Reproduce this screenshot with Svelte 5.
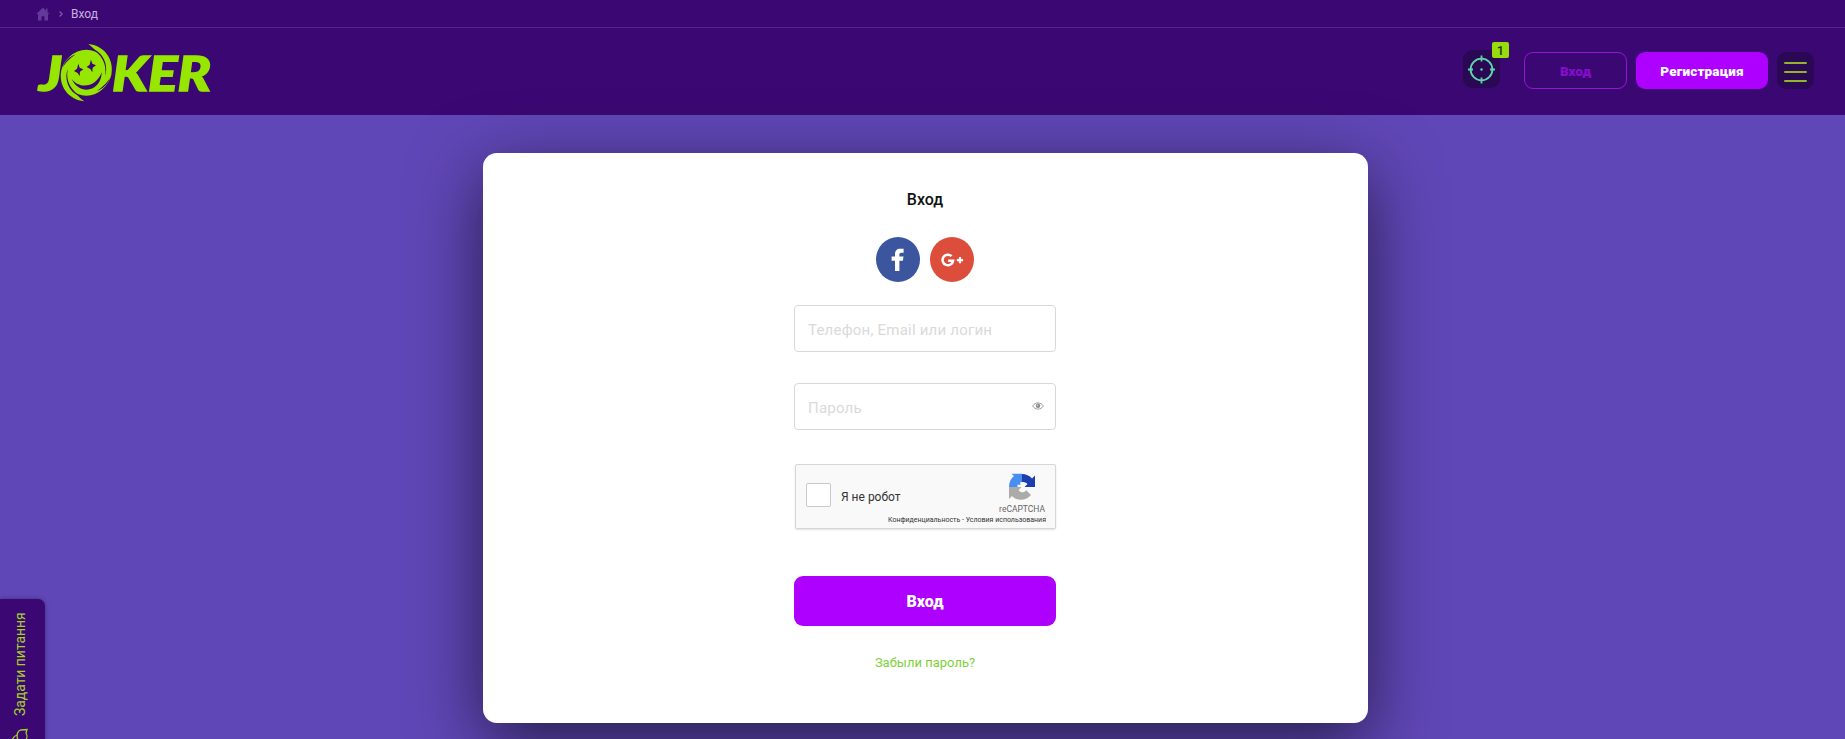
<script lang="ts">
	let login = $state('');
	let password = $state('');
	let showPassword = $state(false);

	const notifications = 1;
</script>

<div class="page">
	<nav class="crumbs">
		<svg class="home" width="14" height="14" viewBox="0 0 14 14">
			<path d="M7 0.6 0.3 7H2v6.6h3.6V9.2h2.8v4.4H12V7h1.7l-2.2-2.1V1.6H10v1.8z" fill="#643999" />
		</svg>
		<svg class="chevron" width="4" height="6" viewBox="0 0 4 6">
			<path d="M.6.5 3.2 3 .6 5.5" fill="none" stroke="#8057ac" stroke-width="1.200" />
		</svg>
		<span>Вход</span>
	</nav>

	<header>
		<a class="logo" href="/" aria-label="Joker">
			<svg width="180" height="64" viewBox="34 40 180 64">
				<g class="word">
					<text x="39" y="91" textLength="23" lengthAdjust="spacingAndGlyphs">J</text>
					<text x="112" y="91" textLength="99" lengthAdjust="spacingAndGlyphs">KER</text>
				</g>
				<g transform="translate(34 40) scale(.3333)">
					<circle cx="157" cy="98" r="74" fill="#3b0873" />
					<circle cx="157" cy="98" r="69" fill="#97e600" />
					<g id="swirl">
						<path d="M163 12C210 16 242 58 232 105C224 135 205 152 180 160C215 125 226 58 163 12z" fill="#97e600" />
						<path d="M170 25C202 42 220 72 213 108C225 78 208 34 170 25z" fill="#3b0873" />
						<path d="M189 153C208 146 222 132 228 114C219 128 208 139 189 153z" fill="#3b0873" />
					</g>
					<use href="#swirl" transform="rotate(180 157 98)" />
					<path d="M133 71l4 12 11 5-10 7-1 14-6-10-11-6 9-7zM171 59l4 12 11 5-10 7-1 14-6-10-11-6 9-7z" fill="#3b0873" />
					<path d="M113 117C136 148 187 143 203 97C203 154 137 169 113 117z" fill="#3b0873" />
				</g>
			</svg>
		</a>

		<div class="actions">
			<button class="icon-button target" aria-label="Бонусы">
				<svg width="27" height="29" viewBox="0 0 27 29" fill="none" stroke="#5ed7ac" stroke-width="1.800">
					<circle cx="13.500" cy="14.500" r="10.900" />
					<path d="M13.500 0.600v5.800M13.500 22.600v5.800M0 14.500h5M22 14.500h5" />
					<circle cx="13.500" cy="14.500" r="1.200" fill="#5ed7ac" stroke="none" />
				</svg>
				<span class="badge">{notifications}</span>
			</button>
			<button class="login">Вход</button>
			<button class="register">Регистрация</button>
			<button class="icon-button menu" aria-label="Меню">
				<span></span>
				<span></span>
				<span></span>
			</button>
		</div>
	</header>

	<main>
		<section class="card">
			<h1>Вход</h1>
			<div class="social">
				<a class="facebook" href="/login/facebook" aria-label="Facebook">
					<svg width="14" height="24" viewBox="0 0 14 24">
						<path d="M4 23V12.700H.6V8.500H4V6.200C4 2.700 6 .8 9 .8h3.600v4H10.200c-1.400 0-1.800.7-1.800 1.900v1.800h4.100l-.6 4.200H8.400V23z" fill="#fff" />
					</svg>
				</a>
				<a class="google" href="/login/google" aria-label="Google+">
					<svg width="23" height="14" viewBox="0 0 23 14" fill="none" stroke="#fff">
						<path d="M10.600 3.200A5.300 5.300 0 1 0 12.100 7.700H7.100" stroke-width="2.500" />
						<path d="M19 4v6.200M15.900 7.100h6.200" stroke-width="2.200" />
					</svg>
				</a>
			</div>

			<form onsubmit={(e) => e.preventDefault()}>
				<div class="field">
					<input type="text" placeholder="Телефон, Email или логин" bind:value={login} />
				</div>
				<div class="field">
					<input
						type={showPassword ? 'text' : 'password'}
						placeholder="Пароль"
						bind:value={password}
					/>
					<button
						class="eye"
						type="button"
						aria-label="Показать пароль"
						onclick={() => (showPassword = !showPassword)}
					>
						<svg width="12" height="8" viewBox="0 0 12 8">
							<path d="M.6 4C3.200-.1 8.800-.1 11.400 4 8.800 8.100 3.200 8.100.6 4z" fill="none" stroke="#a2a2a2" />
							<circle cx="6" cy="3.800" r="2.200" fill="#8c8c8c" />
							<circle cx="5.400" cy="3.200" r=".7" fill="#ddd" />
						</svg>
					</button>
				</div>

				<div class="captcha">
					<div class="captcha-main">
						<span class="checkbox"></span>
						<span class="captcha-label">Я не робот</span>
						<div class="captcha-brand">
							<svg width="28" height="28" viewBox="0 0 28 28">
								<path d="M1 14C1 9 3 5.500 6 3L3.500.800H14V9l-2 .5.5 2.500-3-.5V14z" fill="#478ef0" />
								<path d="M14 1c4 0 7.500 1.500 10 4.500L27 2.500V14H16.500l3-3C18 9.500 16.500 9 14 9z" fill="#1d3eae" />
								<path d="M1 14V26l3-3c5 5.500 14.500 5 19-1l-4.800-4.700c-2.200 3-5.700 2.500-7.700 0L13.500 14z" fill="#ababab" />
							</svg>
							<span>reCAPTCHA</span>
						</div>
					</div>
					<div class="captcha-links">Конфиденциальность - Условия использования</div>
				</div>

				<button class="submit" type="submit">Вход</button>
			</form>
			<a class="forgot" href="/forgot">Забыли пароль?</a>
		</section>
	</main>

	<button class="ask">
		<span>Задати питання</span>
		<svg width="18" height="20" viewBox="0 0 18 20" fill="none" stroke="#a5cf2c" stroke-width="1.300">
			<path d="M6.500 10.500C5.500 7 6.500 3 9.500 2l6.500-.5-1 3.500c1.500 2.500 1 6-1.200 8l-3.200-.5c-2 1-3.500 0-4.100-2zM6 7C2.500 8 .8 11 .8 16" />
		</svg>
	</button>
</div>

<style>
	:global(body) {
		margin: 0;
		overflow: hidden;
	}

	.page {
		position: relative;
		height: 739px;
		overflow: hidden;
		display: flex;
		flex-direction: column;
		background: #6047b7;
		font-family: Roboto, 'Open Sans', sans-serif;
	}

	.page * {
		box-sizing: border-box;
	}

	button {
		font-family: inherit;
		border: 0;
		padding: 0;
		cursor: pointer;
	}

	a {
		text-decoration: none;
	}

	svg {
		display: block;
		flex: none;
	}

	.crumbs {
		display: flex;
		flex: none;
		align-items: center;
		height: 28px;
		padding-left: 36px;
		background: #3b0873;
		border-bottom: 1px solid #562586;
		color: #c9afe0;
		font-size: 12px;
	}

	.chevron {
		margin: 0 8px 0 9px;
	}

	.crumbs span {
		padding-top: 1px;
	}

	header {
		display: flex;
		flex: none;
		justify-content: space-between;
		height: 87px;
		padding: 12px 31px 0 34px;
		background: #3b0873;
	}

	.word {
		fill: #97e600;
		stroke: #97e600;
		stroke-width: 1.4;
		font-family: Lato, sans-serif;
		font-size: 48px;
		font-weight: 900;
		font-style: italic;
	}

	.actions {
		display: flex;
		align-items: flex-start;
		padding-top: 12px;
	}

	.icon-button {
		position: relative;
		display: flex;
		align-items: center;
		justify-content: center;
		width: 37px;
		height: 37px;
		border-radius: 9px;
		background: #2a0854;
	}

	.target {
		margin: -2px 24px 0 0;
		height: 38px;
	}

	.badge {
		position: absolute;
		top: -8px;
		right: -9px;
		width: 17px;
		height: 16px;
		border-radius: 2px;
		background: #97dc0b;
		color: #26332c;
		font-size: 13px;
		font-weight: 500;
		line-height: 17px;
		text-align: center;
	}

	.login,
	.register {
		height: 37px;
		border-radius: 9px;
		font-size: 13.5px;
		font-weight: 900;
	}

	.login {
		width: 103px;
		margin-right: 9px;
		border: 1px solid #9614d6;
		background: transparent;
		color: #860bcb;
	}

	.register {
		width: 132px;
		margin-right: 9px;
		background: #ad00ff;
		color: #fff;
		letter-spacing: 0.15px;
	}

	.menu {
		flex-direction: column;
		gap: 7px;
		padding-top: 2px;
	}

	.menu span {
		width: 23px;
		height: 2px;
		border-radius: 1px;
		background: #91b52c;
	}

	main {
		padding: 38px 0 0 483px;
	}

	.card {
		display: flex;
		flex-direction: column;
		align-items: center;
		width: 885px;
		height: 570px;
		padding: 36px 1px 0 0;
		border-radius: 14px;
		background: #fff;
		box-shadow: 0 20px 70px rgba(0, 0, 0, 0.6);
	}

	h1 {
		margin: 0;
		color: #111;
		font-size: 16px;
		font-weight: 500;
		line-height: 21px;
	}

	.social {
		display: flex;
		gap: 10px;
		margin: 27px 0 23px;
	}

	.social a {
		display: flex;
		align-items: center;
		justify-content: center;
		width: 44px;
		height: 45px;
		border-radius: 50%;
	}

	.facebook {
		background: #3b559f;
	}

	.google {
		background: #dc4e3b;
	}

	form {
		width: 262px;
	}

	.field {
		position: relative;
		height: 47px;
		margin-bottom: 31px;
	}

	input {
		width: 100%;
		height: 47px;
		padding: 2px 13px 0;
		border: 1px solid #d8d8d8;
		border-radius: 4px;
		outline: none;
		background: #fff;
		color: #222;
		font-family: inherit;
		font-size: 15px;
		letter-spacing: 0.22px;
	}

	input::placeholder {
		color: #dadada;
		opacity: 1;
	}

	.eye {
		position: absolute;
		right: 12px;
		top: 19px;
		background: none;
	}

	.captcha {
		width: 261px;
		height: 65px;
		margin: 34px 0 47px 1px;
		padding: 7px 10px 0;
		border: 1px solid #d6d6d6;
		border-radius: 2px;
		background: #f9f9f9;
		box-shadow: 0 1px 2px rgba(0, 0, 0, 0.12);
		color: #333;
	}

	.captcha-main {
		display: flex;
		height: 43px;
	}

	.checkbox {
		width: 25px;
		height: 24px;
		margin-top: 11px;
		border: 1px solid #c9c9c9;
		border-radius: 2px;
		background: #fff;
	}

	.captcha-label {
		flex: 1;
		padding: 17px 0 0 10px;
		font-size: 12px;
		line-height: 16px;
	}

	.captcha-brand {
		display: flex;
		flex-direction: column;
		align-items: center;
		margin-top: 1px;
		color: #666;
		font-size: 8.5px;
		line-height: 14px;
	}

	.captcha-brand span {
		padding-top: 1px;
	}

	.captcha-links {
		margin-right: -1px;
		font-size: 7px;
		line-height: 10px;
		text-align: right;
		white-space: nowrap;
	}

	.submit {
		width: 100%;
		height: 50px;
		border-radius: 9px;
		background: #ad00ff;
		color: #fff;
		font-size: 16px;
		font-weight: 900;
	}

	.forgot {
		margin-top: 28px;
		color: #7ed038;
		font-size: 13px;
		line-height: 18px;
	}

	.ask {
		position: absolute;
		left: 0;
		top: 599px;
		display: flex;
		flex-direction: column;
		align-items: center;
		gap: 12px;
		width: 45px;
		height: 150px;
		padding: 14px 6px 0 0;
		border-radius: 0 7px 0 0;
		background: #3b0873;
		box-shadow: 0 0 4px rgba(0, 0, 0, 0.35);
		color: #a5cf2c;
		font-size: 14px;
	}

	.ask span {
		height: 103px;
		writing-mode: vertical-rl;
		transform: rotate(180deg);
		line-height: 18px;
		letter-spacing: -0.05px;
		white-space: nowrap;
	}
</style>
